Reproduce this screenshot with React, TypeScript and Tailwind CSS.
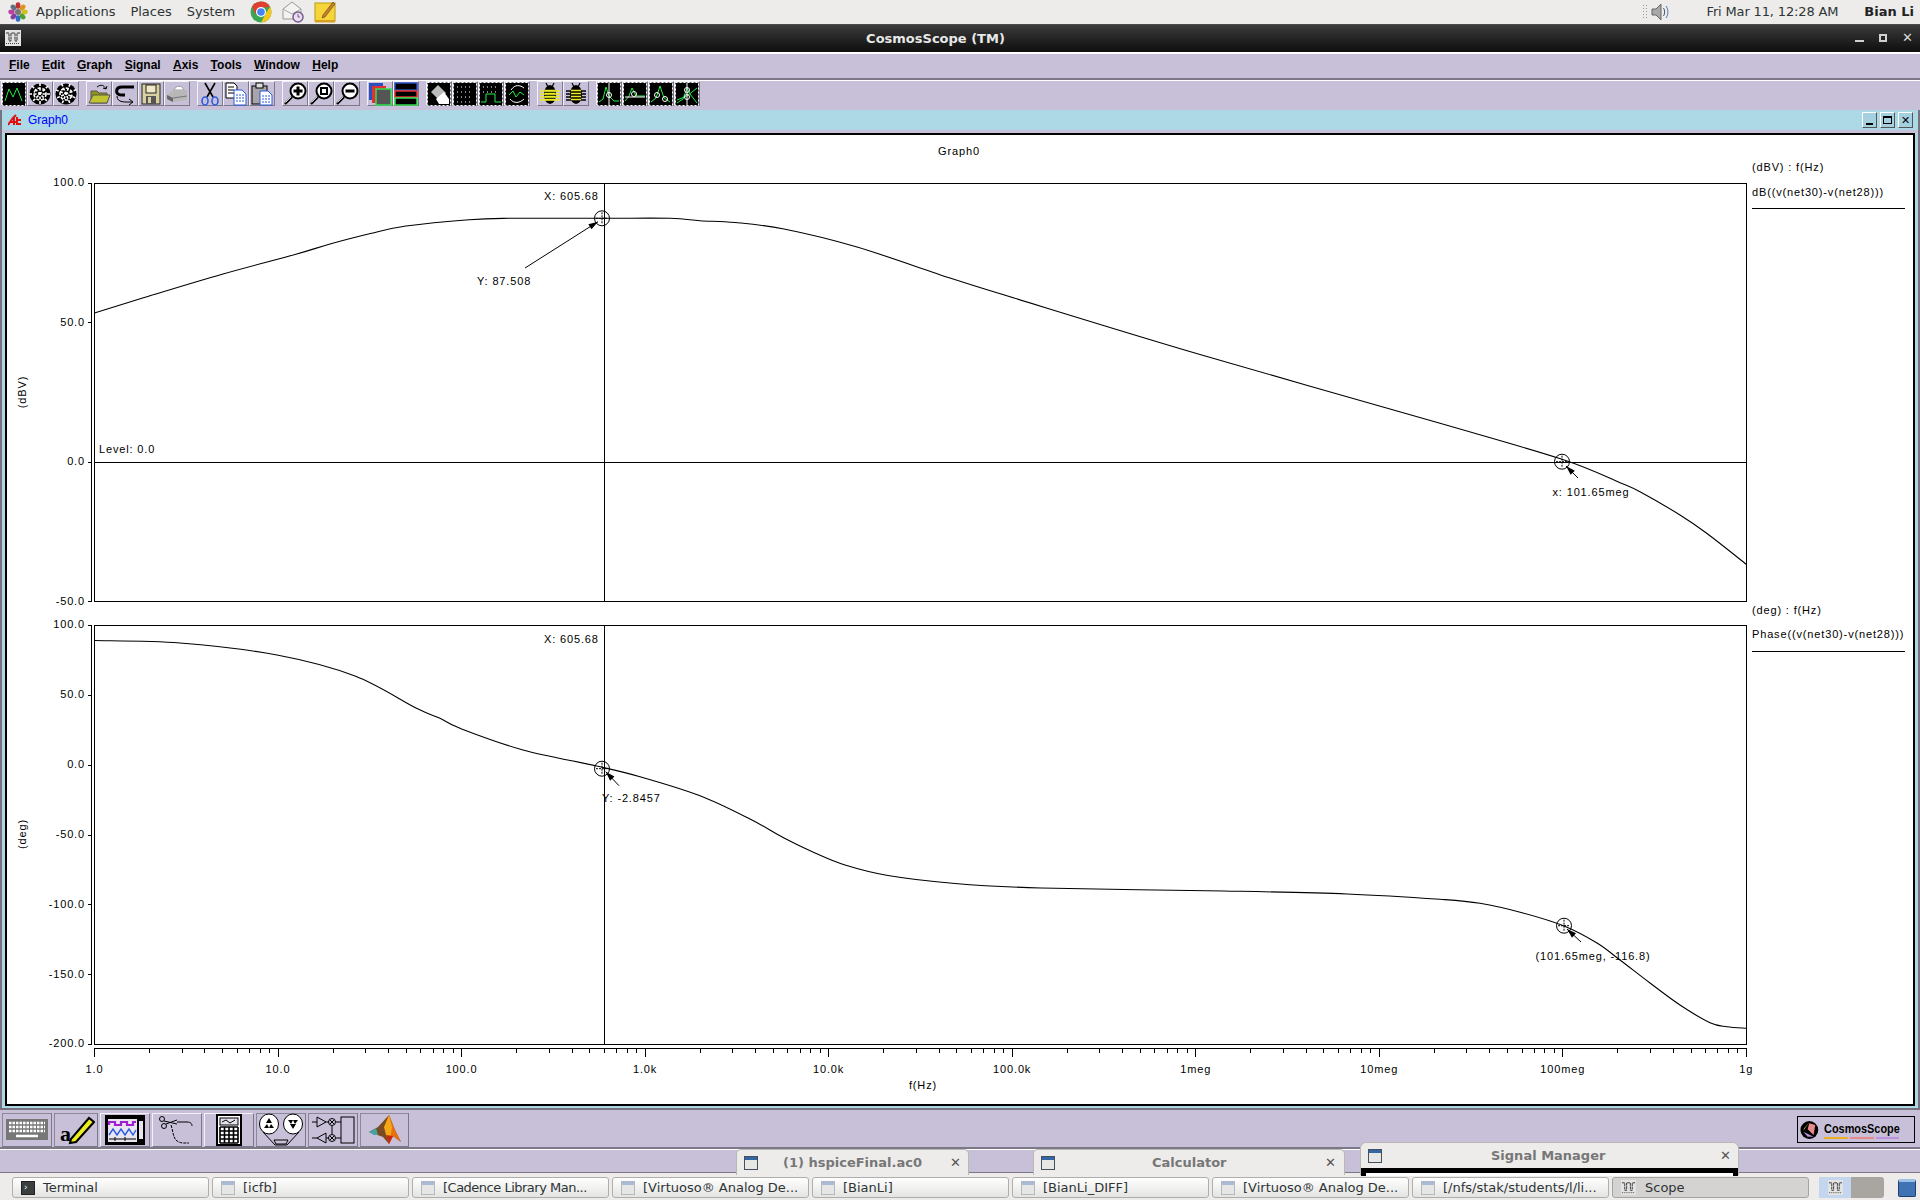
import type { ReactNode } from "react";

type Pt = [number, number];

const magPoints: Pt[] = [
  [94.5, 313], [147, 296.7], [223, 274], [295, 254.5], [330, 244], [370.5, 233.5], [406, 226],
  [469, 219.7], [509, 218.3], [603, 218.3], [670, 218.3], [700, 220.7], [735, 222.5], [784, 229],
  [857, 247], [950, 278], [1014, 298], [1200, 354.5], [1440, 423.3], [1562, 459.3], [1620, 482.7],
  [1640, 491.7], [1680, 515], [1706.7, 533.3], [1746.3, 564.3],
];

const phasePoints: Pt[] = [
  [94.5, 640.5], [180, 643], [277, 655], [355, 676], [416, 708], [440, 718.3], [460, 728.3], [523, 750],
  [596.7, 766], [640, 776.7], [700, 795.7], [750, 819], [784, 838], [815, 853], [845, 865], [888, 875.5], [955, 883.5],
  [1041, 888], [1224, 891], [1347, 894], [1440, 899.3], [1480, 903.3], [1523, 913], [1564, 926],
  [1597, 943], [1620, 960], [1650, 983], [1680, 1005], [1710, 1022.7], [1727, 1026.7], [1746.3, 1028.3],
];

// catmull-rom through the traced points
function smooth(p: Pt[]) {
  let d = `M${p[0][0]} ${p[0][1]}`;
  for (let i = 0; i < p.length - 1; i++) {
    const a = p[Math.max(i - 1, 0)];
    const b = p[i];
    const c = p[i + 1];
    const e = p[Math.min(i + 2, p.length - 1)];
    d += ` C${b[0] + (c[0] - a[0]) / 6} ${b[1] + (c[1] - a[1]) / 6} ${c[0] - (e[0] - b[0]) / 6} ${c[1] - (e[1] - b[1]) / 6} ${c[0]} ${c[1]}`;
  }
  return d;
}

const X0 = 94.5;
const DECADE = 183.53;
const xLabels = ["1.0", "10.0", "100.0", "1.0k", "10.0k", "100.0k", "1meg", "10meg", "100meg", "1g"];

function Label({ x, y, children, anchor = "start" }: { x: number; y: number; children: ReactNode; anchor?: "start" | "middle" | "end" }) {
  return (
    <text x={x} y={y} textAnchor={anchor} fontSize={11} letterSpacing={0.85} fontFamily="'Liberation Sans', sans-serif" fill="#000" dominantBaseline="central">
      {children}
    </text>
  );
}

function Marker({ cx, cy, from, to }: { cx: number; cy: number; from: Pt; to: Pt }) {
  const ang = Math.atan2(to[1] - from[1], to[0] - from[0]);
  const head = (off: number) => `${to[0] - 10 * Math.cos(ang + off)},${to[1] - 10 * Math.sin(ang + off)}`;
  return (
    <g>
      <circle cx={cx} cy={cy} r={7.5} fill="none" stroke="#000" />
      <path d={`M${cx} ${cy - 6}V${cy + 6}M${cx - 6} ${cy}H${cx + 6}`} stroke="#000" strokeDasharray="2 1" />
      <line x1={from[0]} y1={from[1]} x2={to[0]} y2={to[1]} stroke="#000" />
      <polygon points={`${to[0]},${to[1]} ${head(0.3)} ${head(-0.3)}`} fill="#000" />
    </g>
  );
}

function Chart() {
  const ySets = [
    { top: 183, labels: [["100.0", 183], ["50.0", 322.5], ["0.0", 462], ["-50.0", 601.5]] as [string, number][], bottom: 601.5 },
    {
      top: 625,
      labels: [["100.0", 625], ["50.0", 695], ["0.0", 765], ["-50.0", 835], ["-100.0", 904.5], ["-150.0", 974.5], ["-200.0", 1044]] as [string, number][],
      bottom: 1044,
    },
  ];
  const minor: number[] = [];
  for (let d = 0; d < 9; d++) for (let m = 2; m < 10; m++) minor.push(X0 + DECADE * (d + Math.log10(m)));

  return (
    <svg width={1906} height={969} viewBox="7 135 1906 969" className="block bg-white">
      <g stroke="#000" strokeWidth={1} shapeRendering="crispEdges" fill="none">
        <rect x={94.5} y={183} width={1652} height={418.5} />
        <rect x={94.5} y={625} width={1652} height={419} />
        {ySets.map((s) => (
          <g key={s.top}>
            <line x1={91.5} y1={s.top} x2={91.5} y2={s.bottom} />
            {s.labels.map(([t, y]) => (
              <line key={t} x1={87.5} x2={91.5} y1={y} y2={y} />
            ))}
          </g>
        ))}
        <line x1={94.5} x2={1746.5} y1={462} y2={462} />
        <line x1={604} x2={604} y1={183} y2={601.5} />
        <line x1={604} x2={604} y1={625} y2={1044} />
        <line x1={94.5} x2={1746.5} y1={1048} y2={1048} />
        {xLabels.map((t, i) => (
          <line key={t} x1={X0 + DECADE * i} x2={X0 + DECADE * i} y1={1048} y2={1057} />
        ))}
        {minor.map((x) => (
          <line key={x} x1={x} x2={x} y1={1048} y2={1053} />
        ))}
        <line x1={1752} x2={1905} y1={208.5} y2={208.5} />
        <line x1={1752} x2={1905} y1={651} y2={651} />
      </g>

      <path d={smooth(magPoints)} fill="none" stroke="#000" strokeWidth={1.1} />
      <path d={smooth(phasePoints)} fill="none" stroke="#000" strokeWidth={1.1} />

      <Marker cx={602} cy={218.3} from={[525, 268]} to={[598, 221.7]} />
      <Marker cx={1562} cy={461.7} from={[1578, 478]} to={[1566, 466]} />
      <Marker cx={602} cy={768.7} from={[619, 785.7]} to={[605.7, 771.7]} />
      <Marker cx={1564} cy={925.7} from={[1581, 942]} to={[1567, 929]} />

      <Label x={959} y={150.5} anchor="middle">Graph0</Label>
      {ySets.map((s) =>
        s.labels.map(([t, y]) => (
          <Label key={`${s.top}${t}`} x={85} y={y - 1} anchor="end">{t}</Label>
        )),
      )}
      {xLabels.map((t, i) => (
        <Label key={t} x={X0 + DECADE * i} y={1069} anchor="middle">{t}</Label>
      ))}
      <Label x={923} y={1085} anchor="middle">f(Hz)</Label>
      <g transform="rotate(-90 22 392)"><Label x={22} y={392} anchor="middle">(dBV)</Label></g>
      <g transform="rotate(-90 22 834)"><Label x={22} y={834} anchor="middle">(deg)</Label></g>

      <Label x={544} y={195.5}>X: 605.68</Label>
      <Label x={477} y={280.5}>Y: 87.508</Label>
      <Label x={99} y={449}>Level: 0.0</Label>
      <Label x={1552.5} y={492}>x: 101.65meg</Label>
      <Label x={544} y={639}>X: 605.68</Label>
      <Label x={602} y={798}>Y: -2.8457</Label>
      <Label x={1535.5} y={956}>(101.65meg, -116.8)</Label>

      <Label x={1752} y={166.5}>(dBV) : f(Hz)</Label>
      <Label x={1752} y={191.5}>dB((v(net30)-v(net28)))</Label>
      <Label x={1752} y={610}>(deg) : f(Hz)</Label>
      <Label x={1752} y={634}>Phase((v(net30)-v(net28)))</Label>
    </svg>
  );
}

/* ---------- icons ---------- */

function Icon({ children, w = 24, h = 24 }: { children: ReactNode; w?: number; h?: number }) {
  return (
    <svg width={w} height={h} viewBox={`0 0 ${w} ${h}`} fill="none">
      {children}
    </svg>
  );
}

function Screen({ children }: { children: ReactNode }) {
  return (
    <Icon>
      <rect x={0.5} y={0.5} width={23} height={23} fill="#000" />
      <rect x={0.5} y={0.5} width={23} height={23} stroke="#fff" strokeDasharray="2 2" />
      {children}
    </Icon>
  );
}

function Wheel({ spin = 0 }: { spin?: number }) {
  return (
    <Icon>
      <circle cx={12} cy={12} r={10.5} fill="#000" />
      <g stroke="#fff" strokeWidth={1.6} transform={`rotate(${spin} 12 12)`}>
        <circle cx={12} cy={12} r={6} fill="none" strokeDasharray="3 2" />
        <path d="M12 1V23M1 12H23M4 4L20 20M20 4L4 20" strokeDasharray="3 1.5" />
      </g>
    </Icon>
  );
}

function Magnifier({ mark }: { mark: ReactNode }) {
  return (
    <Icon>
      <path d="M9 15L2 22" stroke="#000" strokeWidth={2.4} />
      <path d="M8 15L2.5 20.5" stroke="#fff" strokeWidth={0.8} />
      <circle cx={15} cy={9} r={7.5} fill="#fff" stroke="#000" strokeWidth={2} />
      {mark}
    </Icon>
  );
}

function Bug({ dark = false }: { dark?: boolean }) {
  return (
    <Icon>
      <path d="M8 1L10 5M16 1L14 5" stroke="#000" strokeWidth={1.2} />
      <ellipse cx={12} cy={12.5} rx={6} ry={9.5} fill="#000" />
      <path d="M2 9H22M2 12H22M2 15H22M2 18H22" stroke={dark ? "#000" : "#ecec20"} strokeWidth={1.4} />
      <path d="M7 8.5H17M7 11.5H17M7 14.5H17M7 17.5H17" stroke="#ecec20" strokeWidth={1.4} />
    </Icon>
  );
}

const toolbarIcons: ReactNode[][] = [
  [
    <Screen key="a"><path d="M3 19L7 7L11 15L15 6L20 19" stroke="#22ee44" /></Screen>,
    <Wheel key="b" />,
    <Wheel key="c" spin={22} />,
  ],
  [
    <Icon key="a">
      <path d="M4 9H10L12 11H20V21H4Z" fill="#8f9414" stroke="#555" />
      <path d="M2 21L6 13H23L20 21Z" fill="#c0c430" stroke="#555" />
      <path d="M10 5C14 2 17 3 19 7M19 7L16 6M19 7L20 4" stroke="#000" />
    </Icon>,
    <Icon key="b">
      <path d="M21 5H9C2 5 2 13 8 13H12" stroke="#000" strokeWidth={3} />
      <path d="M4 14C4 21 12 20 20 20M20 20L16 17M20 20L16 23" stroke="#000" />
    </Icon>,
    <Icon key="c">
      <rect x={3} y={2} width={18} height={20} fill="#d8d0a0" stroke="#222" />
      <rect x={7} y={3} width={10} height={8} fill="#f0e8c8" stroke="#222" />
      <rect x={7} y={14} width={10} height={8} fill="#555" />
      <rect x={9} y={15} width={3} height={6} fill="#d8d0a0" />
    </Icon>,
    <Icon key="d">
      <path d="M9 8C11 3 17 3 19 8Z" fill="#fff" stroke="#999" />
      <path d="M2 13L8 8H22V18L8 20L2 17Z" fill="#b8b8b8" />
      <path d="M2 13L8 16V20L2 17Z" fill="#666" />
      <path d="M8 16L22 14" stroke="#777" />
    </Icon>,
  ],
  [
    <Icon key="a">
      <path d="M7 1L15 15M17 1L9 15" stroke="#000" strokeWidth={1.6} />
      <ellipse cx={7} cy={19} rx={3} ry={4} stroke="#2a5be0" strokeWidth={1.6} />
      <ellipse cx={17} cy={19} rx={3} ry={4} stroke="#2a5be0" strokeWidth={1.6} />
    </Icon>,
    <Icon key="b">
      <path d="M2 1H10L13 4V16H2Z" fill="#fff" stroke="#000" />
      <path d="M4 5H10M4 8H10M4 11H10" stroke="#000" />
      <path d="M10 8H18L22 12V23H10Z" fill="#fff" stroke="#2a5be0" />
      <path d="M12 13H20M12 16H20M12 19H20" stroke="#2a5be0" strokeDasharray="2 1" />
    </Icon>,
    <Icon key="c">
      <rect x={2} y={4} width={15} height={18} fill="#a8a4a8" stroke="#000" />
      <rect x={6} y={1} width={7} height={5} fill="#ddd" stroke="#000" />
      <path d="M10 9H18L22 13V23H10Z" fill="#fff" stroke="#2a5be0" />
      <path d="M12 14H20M12 17H20M12 20H20" stroke="#2a5be0" strokeDasharray="2 1" />
    </Icon>,
  ],
  [
    <Magnifier key="a" mark={<path d="M15 4.5V13.5M10.5 9H19.5" stroke="#000" strokeWidth={3} />} />,
    <Magnifier key="b" mark={<rect x={12} y={6} width={6} height={6} stroke="#000" strokeWidth={2} />} />,
    <Magnifier key="c" mark={<path d="M10.5 9H19.5" stroke="#000" strokeWidth={3} />} />,
  ],
  [
    <Icon key="a">
      <rect x={1} y={1} width={14} height={17} fill="#2a4fc0" />
      <rect x={4} y={4} width={14} height={17} fill="#e03030" />
      <rect x={8} y={7} width={15} height={16} fill="#555" stroke="#30e050" strokeWidth={1.5} />
    </Icon>,
    <Icon key="b">
      <rect x={1} y={1} width={22} height={7} fill="#000" stroke="#2a4fc0" strokeWidth={1.5} />
      <rect x={1} y={9} width={22} height={6} fill="#000" stroke="#e03030" strokeWidth={1.5} />
      <rect x={1} y={16} width={22} height={7} fill="#000" stroke="#30e050" strokeWidth={1.5} />
    </Icon>,
  ],
  [
    <Screen key="a">
      <path d="M4 10L11 3L19 11L12 18Z" fill="#bbb" />
      <path d="M9 17L17 10L22 17V22H12Z" fill="#fff" />
    </Screen>,
    <Screen key="b"><path d="M4 5H20M4 10H20M4 15H20M4 20H20" stroke="#fff" strokeDasharray="1 3" /></Screen>,
    <Screen key="c">
      <path d="M4 5H20M4 10H20" stroke="#fff" strokeDasharray="1 3" />
      <path d="M2 20H7V12H16V20H22" stroke="#22ee44" />
    </Screen>,
    <Screen key="d">
      <path d="M4 13L8 9L11 15L15 10L19 13" stroke="#22ee44" />
      <path d="M6 8C10 2 15 3 19 6M5 17C9 22 15 21 19 17" stroke="#fff" />
    </Screen>,
  ],
  [<Bug key="a" />, <Bug key="b" dark />],
  [
    <Screen key="a">
      <path d="M2 20L6 17L9 5L12 14L17 19H22" stroke="#22ee44" />
      <path d="M12 1V23" stroke="#fff" />
      <circle cx={12} cy={13} r={2.5} stroke="#fff" />
    </Screen>,
    <Screen key="b">
      <path d="M2 19L6 14L9 6L13 14H22" stroke="#22ee44" />
      <path d="M2 15H22" stroke="#fff" />
      <circle cx={11} cy={12} r={2.5} stroke="#fff" />
    </Screen>,
    <Screen key="c">
      <path d="M2 20L7 16L11 4L15 16L21 20" stroke="#22ee44" />
      <circle cx={8} cy={13} r={2.5} stroke="#fff" />
      <circle cx={16} cy={17} r={2.5} stroke="#fff" />
    </Screen>,
    <Screen key="d">
      <path d="M2 21L8 17L12 6L15 12L22 21M2 18L12 14L22 6" stroke="#22ee44" />
      <path d="M12 1V23" stroke="#fff" />
      <circle cx={12} cy={8} r={2.5} stroke="#fff" />
      <circle cx={12} cy={15} r={2.5} stroke="#fff" />
    </Screen>,
  ],
];

function ScopeGlyph({ size = 16 }: { size?: number }) {
  return (
    <svg width={size} height={size} viewBox="0 0 16 16" className="shrink-0">
      <rect width={16} height={16} fill="#e4e4e4" />
      <path d="M1 3H4V11H6V3H10V11H12V3H15" stroke="#333" fill="none" strokeDasharray="3 0.6" />
      <path d="M1 13.5H15" stroke="#444" strokeDasharray="1 1" />
    </svg>
  );
}

function WinIcon({ strong = false }: { strong?: boolean }) {
  return (
    <span className={`block h-[14px] w-[14px] shrink-0 border bg-[#e6e6e4] ${strong ? "border-[#46505c]" : "border-[#b4b8c0]"}`}>
      <span className={`block h-[3px] ${strong ? "bg-[#3465a4]" : "bg-[#a8bcd8]"}`} />
    </span>
  );
}

function BevelBtn({ w, children, raised = false }: { w: number; children: ReactNode; raised?: boolean }) {
  return (
    <div
      className={`flex h-[34px] items-center justify-center border border-b-[#7d7888] border-r-[#7d7888] ${raised ? "border-l-[#f4f2f8] border-t-[#f4f2f8]" : "border-l-[#8d8898] border-t-[#8d8898]"}`}
      style={{ width: w }}
    >
      {children}
    </div>
  );
}

const dockIcons: { w: number; raised?: boolean; icon: ReactNode }[] = [
  {
    w: 50,
    icon: (
      <svg width={42} height={21} viewBox="0 0 42 21">
        <rect width={42} height={21} fill="#777" />
        <path d="M3 4H39M3 8H39M3 12H39" stroke="#fff" strokeWidth={2.5} strokeDasharray="2.5 1" />
        <path d="M10 17H32" stroke="#fff" strokeWidth={2.5} />
      </svg>
    ),
  },
  {
    w: 44,
    icon: (
      <svg width={38} height={30} viewBox="0 0 38 30">
        <text x={3} y={26} fontSize={22} fontWeight={700} fontFamily="'Liberation Serif', serif" fill="#000">a</text>
        <path d="M14 24L32 3L37 7L19 27L13 28Z" fill="#ecec20" stroke="#000" strokeWidth={2} />
      </svg>
    ),
  },
  {
    w: 50,
    raised: true,
    icon: (
      <svg width={40} height={30} viewBox="0 0 40 30">
        <rect width={40} height={30} fill="#000" />
        <rect x={3} y={4} width={29} height={23} fill="#e8e4f0" />
        <rect x={34} y={6} width={4} height={18} fill="#e8e4f0" />
        <path d="M4 10V7H10V10H16V7H22V10H28V7H31" stroke="#a020d0" strokeWidth={2.2} fill="none" />
        <path d="M4 20L8 14L12 20L16 14L20 20L24 14L28 20L31 15" stroke="#2a5be0" strokeWidth={1.4} fill="none" />
        <path d="M4 24H31M10 22V26M20 22V26" stroke="#000" />
      </svg>
    ),
  },
  {
    w: 50,
    raised: true,
    icon: (
      <svg width={36} height={30} viewBox="0 0 36 30" fill="none" stroke="#000">
        <circle cx={3} cy={4} r={2.5} />
        <circle cx={5} cy={11} r={2.5} />
        <path d="M5 6L18 9M7 9L18 5" />
        <path d="M18 7H28C32 7 33 9 33 11" />
        <path d="M12 10C15 18 13 27 24 28H30" strokeDasharray="3 1" />
      </svg>
    ),
  },
  {
    w: 50,
    raised: true,
    icon: (
      <svg width={26} height={32} viewBox="0 0 26 32">
        <rect x={1} y={1} width={24} height={30} fill="#fff" stroke="#000" strokeWidth={2} />
        <rect x={4} y={4} width={18} height={7} fill="#e4e0ec" stroke="#000" />
        <path d="M6 8L10 6L14 9L19 6" stroke="#000" fill="none" />
        <path d="M4 13H22M4 17H22M4 21H22M4 25H22M4 29H22M4 13V29M8.5 13V29M13 13V29M17.5 13V29M22 13V29" stroke="#000" strokeWidth={1.6} />
      </svg>
    ),
  },
  {
    w: 50,
    icon: (
      <svg width={46} height={33} viewBox="0 0 46 33">
        <ellipse cx={11} cy={11} rx={9.5} ry={10} fill="#fff" stroke="#000" />
        <ellipse cx={35} cy={11} rx={9.5} ry={10} fill="#fff" stroke="#000" />
        <path d="M11 5L14 10H8ZM6 15L9 11L11 15ZM16 15L13 11L11 15Z" fill="#000" />
        <path d="M35 16L32 11H38ZM30 7L33 11L35 7ZM40 7L37 11L35 7Z" fill="#000" />
        <path d="M5 19L17 32H29L41 19M16 27H30L28 31H18Z" stroke="#000" fill="none" />
      </svg>
    ),
  },
  {
    w: 50,
    icon: (
      <svg width={44} height={30} viewBox="0 0 44 30" fill="none" stroke="#000">
        <path d="M1 7H6M6 2L15 7L6 12ZM15 7H18M1 23H6M15 18L6 23L15 28ZM15 23H18" />
        <circle cx={21} cy={7} r={3.5} />
        <circle cx={21} cy={23} r={3.5} />
        <path d="M19 5L23 9M23 5L19 9M19 21L23 25M23 21L19 25M21 11V19M25 7H30M25 23H30" />
        <rect x={30} y={2} width={13} height={26} />
      </svg>
    ),
  },
  {
    w: 49,
    icon: (
      <svg width={32} height={29} viewBox="0 0 32 29">
        <path d="M0 17L9 12L20 0L26 15L32 27L24 21L20 29L14 22Z" fill="#7a4a20" />
        <path d="M20 0L26 15L32 27L24 21L20 29L17 20Z" fill="#e87010" />
        <path d="M15 12L20 0L23 12L21 25L17 20Z" fill="#f4a818" />
        <path d="M20 29L17 20L24 21Z" fill="#c82810" />
        <path d="M0 17L7 13L9 20L5 20Z" fill="#48a0a0" />
      </svg>
    ),
  },
];

const taskItems = [
  { label: "Terminal", cls: "" },
  { label: "[icfb]", cls: "" },
  { label: "[Cadence Library Man...", cls: "tracking-[-0.5px]" },
  { label: "[Virtuoso® Analog De...", cls: "" },
  { label: "[BianLi]", cls: "" },
  { label: "[BianLi_DIFF]", cls: "" },
  { label: "[Virtuoso® Analog De...", cls: "" },
  { label: "[/nfs/stak/students/l/li...", cls: "" },
];

function GnomeFoot() {
  const c = ["#c03030", "#e09020", "#d0c020", "#50a030", "#3070c0", "#8040a0", "#c040a0", "#607080"];
  return (
    <svg width={20} height={20} viewBox="0 0 20 20">
      {c.map((f, i) => (
        <ellipse key={f} cx={10} cy={3.5} rx={2.4} ry={3.2} fill={f} transform={`rotate(${i * 45} 10 10)`} />
      ))}
      <circle cx={10} cy={10} r={3} fill="#777" />
    </svg>
  );
}

function Chrome() {
  return (
    <svg width={22} height={22} viewBox="0 0 22 22">
      <circle cx={11} cy={11} r={10.5} fill="#3aa655" />
      <path d="M11 .5A10.5 10.5 0 0 1 20.1 5.8L11 7Z M2 5.5A10.5 10.5 0 0 1 11 .5V7L6 14Z" fill="#e04030" />
      <path d="M20.1 5.8A10.5 10.5 0 0 1 11 21.5L16 12Z" fill="#f5c518" />
      <circle cx={11} cy={11} r={5} fill="#fff" />
      <circle cx={11} cy={11} r={3.8} fill="#4285f4" />
    </svg>
  );
}

function Mail() {
  return (
    <svg width={22} height={24} viewBox="0 0 22 24">
      <path d="M1 9L10 2L19 9V19H1Z" fill="#f2f2f2" stroke="#999" />
      <path d="M1 9L10 14L19 9" fill="none" stroke="#aaa" />
      <circle cx={16} cy={17} r={5} fill="#e8e0ee" stroke="#7a5a90" strokeWidth={1.5} />
      <path d="M16 14V17H18" stroke="#7a5a90" fill="none" />
    </svg>
  );
}

function Note() {
  return (
    <svg width={22} height={22} viewBox="0 0 22 22">
      <rect x={1} y={2} width={20} height={18} fill="#f5d53a" stroke="#b89a10" />
      <rect x={1} y={19} width={20} height={2.5} fill="#d8a020" />
      <path d="M9 14L19 1L21 3L11 16L8 17Z" fill="#c08030" stroke="#704010" strokeWidth={0.6} />
    </svg>
  );
}

function Speaker() {
  return (
    <svg width={20} height={20} viewBox="0 0 20 20" fill="none">
      <path d="M1 7H5L10 2V18L5 13H1Z" fill="#a8a8a8" stroke="#666" />
      <path d="M12.5 6C14 8 14 12 12.5 14" stroke="#555" />
      <path d="M15 4C17.5 7 17.5 13 15 16" stroke="#4a76bc" />
    </svg>
  );
}

export default function App() {
  return (
    <div className="relative flex h-[1200px] w-[1920px] flex-col overflow-hidden bg-[#c8c0d8] font-['DejaVu_Sans',sans-serif]">
      {/* gnome top panel */}
      <div className="flex h-[25px] shrink-0 items-center border-b border-[#4a4a48] bg-[#edeceb] text-[13px] text-[#2e3436]">
        <span className="ml-[8px]"><GnomeFoot /></span>
        <span className="ml-[8px]">Applications</span>
        <span className="ml-[15px]">Places</span>
        <span className="ml-[15px]">System</span>
        <span className="ml-[15px]"><Chrome /></span>
        <span className="ml-[10px]"><Mail /></span>
        <span className="ml-[10px]"><Note /></span>
        <span className="ml-auto mr-[4px] h-[16px] w-[5px] bg-[radial-gradient(#999_1px,transparent_1px)] bg-[length:3px_3px]" />
        <Speaker />
        <span className="ml-[36px] tracking-[-0.15px]">Fri Mar 11, 12:28 AM</span>
        <span className="ml-[26px] mr-[6px] font-bold text-[#222]">Bian Li</span>
      </div>

      {/* window title */}
      <div className="relative flex h-[27px] shrink-0 items-center justify-center bg-gradient-to-b from-[#3c3c3c] to-[#0e0e0e] text-[13px] font-bold text-[#e8e8e8]">
        <span className="absolute left-[5px] top-[5px]"><ScopeGlyph /></span>
        <span className="-ml-[49px]">CosmosScope (TM)</span>
        <div className="absolute right-[8px] top-[6px] flex items-center gap-[15px] text-[#d8d8d8]">
          <span className="mt-[7px] h-[2px] w-[9px] bg-[#d0d0d0]" />
          <span className="h-[8px] w-[8px] border-2 border-[#d0d0d0]" />
          <span className="w-[10px] text-[13px] leading-none">✕</span>
        </div>
      </div>

      {/* menu bar */}
      <div className="flex h-[28px] shrink-0 items-center gap-[12.3px] border-y-2 border-b-[#7d7888] border-t-white pb-[2px] pl-[9px] font-['Liberation_Sans',sans-serif] text-[12px] font-bold text-black">
        {["File", "Edit", "Graph", "Signal", "Axis", "Tools", "Window", "Help"].map((m) => (
          <span key={m}>
            <span className="underline">{m[0]}</span>
            {m.slice(1)}
          </span>
        ))}
      </div>

      {/* toolbar */}
      <div className="flex h-[28px] shrink-0 gap-[7px] border-t border-white pl-[1px]">
        {toolbarIcons.map((group, i) => (
          <div key={i} className="flex">
            {group.map((icon, j) => (
              <div key={j} className="flex h-[25px] w-[26px] items-center justify-center border border-b-[#7d7888] border-l-[#f4f2f8] border-r-[#7d7888] border-t-[#f4f2f8]">
                {icon}
              </div>
            ))}
          </div>
        ))}
      </div>

      {/* graph frame */}
      <div className="h-[1002px] shrink-0 pt-[2px]">
        <div className="flex h-[1000px] flex-col border-x-2 border-b-2 border-[#76727e] bg-[#add8e6]">
          <div className="flex h-[20px] shrink-0 items-center pl-[6px] font-['Liberation_Sans',sans-serif] text-[12px] text-[#0000ff]">
            <svg width={14} height={12} viewBox="0 0 14 12" className="mr-[6px]">
              <path d="M0 11L5 4L8 1M6 4V11M2 8H9M9 3V10H13M9 6H13" stroke="#e01010" strokeWidth={2} fill="none" />
            </svg>
            Graph0
            <div className="ml-auto mr-[5px] flex gap-[3px]">
              {["min", "max", "close"].map((b) => (
                <span key={b} className="flex h-[16px] w-[15px] items-center justify-center border border-b-[#555] border-l-white border-r-[#555] border-t-white bg-[#a4d0e0]">
                  {b === "min" && <span className="mt-[8px] h-[2px] w-[7px] bg-black" />}
                  {b === "max" && <span className="h-[8px] w-[9px] border border-t-2 border-black" />}
                  {b === "close" && <span className="text-[11px] leading-none text-black">✕</span>}
                </span>
              ))}
            </div>
          </div>
          <div className="h-[3px] shrink-0 bg-[#c8c0d8]" />
          <div className="mx-[3px] border-2 border-black">
            <Chart />
          </div>
        </div>
      </div>

      {/* launcher dock */}
      <div className="flex h-[39px] shrink-0 items-center gap-[2px] border-b-2 border-[#7d7888] pl-[2px] pt-[2px]">
        {dockIcons.map((d, i) => (
          <BevelBtn key={i} w={d.w} raised={d.raised}>{d.icon}</BevelBtn>
        ))}
        <div className="ml-auto mr-[5px] flex h-[27px] w-[118px] items-center border border-black pl-[2px]">
          <svg width={22} height={22} viewBox="0 0 22 22" className="mr-[5px]">
            <circle cx={11} cy={11} r={10.5} fill="#000" />
            <path d="M11 2L5 9L4 12Z" fill="#e8b020" />
            <path d="M11 3L18 5L16 17L9 10Z" fill="#e88a8a" />
            <path d="M4 13L16 19L9 19Z" fill="#c090e0" />
          </svg>
          <div className="flex flex-col">
            <span className="origin-left scale-x-[0.84] whitespace-nowrap font-['Liberation_Sans',sans-serif] text-[13px] font-bold leading-[15px] text-black">CosmosScope</span>
            <div className="mt-[1px] flex gap-[2px]">
              <span className="h-[2px] w-[24px] bg-[#e8b020]" />
              <span className="h-[2px] w-[24px] bg-[#e88a8a]" />
              <span className="h-[2px] w-[23px] bg-[#c090e0]" />
            </div>
          </div>
        </div>
      </div>

      {/* empty strip holding the minimised tool windows */}
      <div className="h-[24px] shrink-0 border-y border-b-[#7d7888] border-t-white" />

      {/* gnome task bar */}
      <div className="flex h-[27px] shrink-0 items-start gap-[3px] bg-[#edeceb] pl-[12px] pt-[4px] text-[13px] text-[#2e3436]">
        {taskItems.map((t, i) => (
          <div key={i} className="flex h-[21px] w-[197px] shrink-0 items-center rounded-[3px] border border-[#aeaeaa] bg-gradient-to-b from-white to-[#e4e4e2] pl-[8px]">
            {i === 0 ? (
              <span className="flex h-[14px] w-[14px] shrink-0 items-center border border-[#222] bg-[#3a4040] pl-[2px] text-[9px] leading-none text-white">›</span>
            ) : (
              <WinIcon />
            )}
            <span className={`ml-[8px] whitespace-nowrap ${t.cls}`}>{t.label}</span>
          </div>
        ))}
        <div className="flex h-[21px] w-[197px] shrink-0 items-center rounded-[3px] border border-[#a4a4a0] bg-[#d4d3d1] pl-[8px]">
          <ScopeGlyph size={15} />
          <span className="ml-[9px]">Scope</span>
        </div>
        <div className="ml-[7px] flex h-[21px] w-[65px] shrink-0 rounded-[3px] bg-[#a9a5a1]">
          <span className="flex w-[32px] items-center justify-center bg-[#c4d6ee]"><ScopeGlyph size={15} /></span>
        </div>
        <div className="ml-[11px] mt-[2px] h-[18px] w-[18px] shrink-0 rounded-[2px] border border-[#1f3f70] border-t-[3px] border-t-[#9cc0e8] bg-[#3f73b4]" />
      </div>

      {/* tool windows overlapping the bottom edge of the desktop */}
      <div className="absolute left-[736px] top-[1149px] flex h-[26px] w-[233px] items-center rounded-t-[5px] border border-b-0 border-[#b8b8b4] bg-[#edeceb] px-[7px] text-[13px] font-bold text-[#777]">
        <WinIcon strong />
        <span className="ml-[25px]">(1) hspiceFinal.ac0</span>
        <span className="ml-auto text-[#555]">✕</span>
      </div>
      <div className="absolute left-[1033px] top-[1149px] flex h-[26px] w-[312px] items-center rounded-t-[5px] border border-b-0 border-[#b8b8b4] bg-[#edeceb] px-[7px] text-[13px] font-bold text-[#777]">
        <WinIcon strong />
        <span className="ml-[97px]">Calculator</span>
        <span className="ml-auto mr-[1px] text-[#555]">✕</span>
      </div>
      <div className="absolute left-[1360px] top-[1142px] h-[33px] w-[379px] rounded-t-[6px] border border-b-0 border-[#b8b8b4] bg-[#edeceb] text-[13px] font-bold text-[#777]">
        <div className="flex h-[25px] items-center px-[7px]">
          <WinIcon strong />
          <span className="ml-[109px]">Signal Manager</span>
          <span className="ml-auto text-[#555]">✕</span>
        </div>
        <div className="h-[8px] border-x-[5px] border-t-[5px] border-black bg-white" />
      </div>
    </div>
  );
}
